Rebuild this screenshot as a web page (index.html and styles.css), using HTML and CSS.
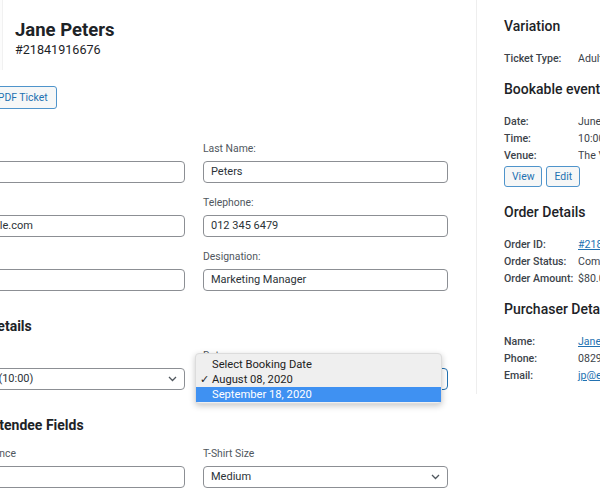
FILE: index.html
```html
<!DOCTYPE html>
<html lang="en">
<head>
<meta charset="utf-8">
<title>Attendee</title>
<link rel="stylesheet" href="styles.css">
</head>
<body>
<div class="page">
  <main class="main">
    <header class="attendee">
      <div class="avatar"></div>
      <div class="who">
        <h1 class="name">Jane Peters</h1>
        <div class="ticket-no">#21841916676</div>
      </div>
    </header>
    <button class="btn btn-ticket" type="button">Download PDF Ticket</button>

    <div class="fields fields-first">
      <div class="field"><label>First Name:</label><div class="input">Jane</div></div>
      <div class="field"><label>Last Name:</label><div class="input">Peters</div></div>
      <div class="field"><label>Email:</label><div class="input">jp@example.com</div></div>
      <div class="field"><label>Telephone:</label><div class="input">012 345 6479</div></div>
      <div class="field"><label>Company:</label><div class="input">Acme</div></div>
      <div class="field"><label>Designation:</label><div class="input">Marketing Manager</div></div>
    </div>

    <h2 class="section-title">Booking Details</h2>
    <div class="fields">
      <div class="field"><label>Slot:</label>
        <div class="input select">Session 1 (10:00)<svg class="chev" width="9" height="6" viewBox="0 0 9 6"><path d="M1 1l3.5 3.5L8 1" fill="none" stroke="#50575e" stroke-width="1.3"/></svg></div>
      </div>
      <div class="field field-date"><label>Date:</label>
        <div class="input select focus"><span class="under">August 08, 2020</span><svg class="chev" width="9" height="6" viewBox="0 0 9 6"><path d="M1 1l3.5 3.5L8 1" fill="none" stroke="#50575e" stroke-width="1.3"/></svg></div>
        <ul class="popup">
          <li class="opt">Select Booking Date</li>
          <li class="opt checked"><span class="tick">✓</span>August 08, 2020</li>
          <li class="opt hover">September 18, 2020</li>
        </ul>
      </div>
    </div>

    <h2 class="section-title">Custom Attendee Fields</h2>
    <div class="fields">
      <div class="field"><label>Food Preference</label><div class="input"></div></div>
      <div class="field"><label>T-Shirt Size</label>
        <div class="input select">Medium<svg class="chev" width="9" height="6" viewBox="0 0 9 6"><path d="M1 1l3.5 3.5L8 1" fill="none" stroke="#50575e" stroke-width="1.3"/></svg></div>
      </div>
    </div>
  </main>

  <aside class="side">
    <section class="box">
      <h3 class="box-title">Variation</h3>
      <dl class="rows">
        <dt>Ticket Type:</dt><dd>Adult</dd>
      </dl>
    </section>
    <section class="box box-event">
      <h3 class="box-title">Bookable event</h3>
      <dl class="rows">
        <dt>Date:</dt><dd>June 20, 2020</dd>
        <dt>Time:</dt><dd>10:00</dd>
        <dt>Venue:</dt><dd>The Venue</dd>
      </dl>
      <div class="btn-row">
        <button class="btn btn-small" type="button">View</button>
        <button class="btn btn-small" type="button">Edit</button>
      </div>
    </section>
    <section class="box">
      <h3 class="box-title">Order Details</h3>
      <dl class="rows">
        <dt>Order ID:</dt><dd><a href="#">#21841916676</a></dd>
        <dt>Order Status:</dt><dd>Completed</dd>
        <dt>Order Amount:</dt><dd>$80.00</dd>
      </dl>
    </section>
    <section class="box">
      <h3 class="box-title">Purchaser Details</h3>
      <dl class="rows">
        <dt>Name:</dt><dd><a href="#">Jane Peters</a></dd>
        <dt>Phone:</dt><dd>0829876543</dd>
        <dt>Email:</dt><dd><a href="#">jp@example.com</a></dd>
      </dl>
    </section>
  </aside>
</div>
</body>
</html>
```

FILE: styles.css
```css
* { box-sizing: border-box; }

html, body {
  margin: 0;
  padding: 0;
  background: #fff;
  overflow: hidden;
}

body {
  font-family: Roboto, "Liberation Sans", Arial, sans-serif;
  color: #1d2327;
  width: 600px;
  height: 500px;
}

.page {
  display: flex;
  align-items: flex-start;
}

.main {
  flex: 0 0 536px;
  margin-left: -60px;
}

.attendee {
  display: flex;
  gap: 12px;
  height: 70px;
}

.avatar {
  width: 63px;
  height: 70px;
  background: #fcfcfc;
  border-right: 1px solid #f1f1f1;
}

.who { padding-top: 19px; }

.name {
  margin: 0;
  font-size: 18.5px;
  line-height: 22px;
  font-weight: 700;
  color: #1d2327;
}

.ticket-no {
  font-size: 12.6px;
  line-height: 18px;
  color: #1d2327;
}

.btn {
  font-family: inherit;
  background: #f6f7f7;
  color: #2271b1;
  border: 1px solid #4f94cb;
  border-radius: 3px;
  cursor: pointer;
  white-space: nowrap;
}

.btn-ticket {
  margin-top: 16px;
  height: 23px;
  padding: 0 8px;
  font-size: 10.4px;
}

.fields {
  display: grid;
  grid-template-columns: 245px 245px;
  column-gap: 18px;
  row-gap: 13px;
}

.fields-first { margin-top: 33px; }

.field { position: relative; }

.field label {
  display: block;
  font-size: 10.4px;
  line-height: 13px;
  color: #50575e;
  margin-bottom: 6px;
  white-space: nowrap;
}

.input {
  height: 22px;
  border: 1px solid #8c8f94;
  border-radius: 4px;
  background: #fff;
  padding: 0 7px;
  font-size: 11px;
  line-height: 20px;
  color: #2c3338;
  white-space: nowrap;
  overflow: hidden;
}

.select {
  display: flex;
  align-items: center;
  justify-content: space-between;
  padding-right: 7px;
}

.select.focus {
  border-color: #2271b1;
}

.under { visibility: hidden; }

.chev { flex: none; }

.section-title {
  margin: 26px 0 13.5px -7px;
  font-size: 14px;
  line-height: 18px;
  font-weight: 700;
  color: #1d2327;
  white-space: nowrap;
}

.popup {
  position: absolute;
  left: -8px;
  top: 4.5px;
  width: 247px;
  margin: 0;
  padding: 3px 0 1px;
  list-style: none;
  background: #efefef;
  border: 1px solid #dcdcdc;
  border-radius: 4px;
  box-shadow: 0 2px 6px rgba(0, 0, 0, 0.22);
  font-size: 11.2px;
}

.opt {
  position: relative;
  height: 15px;
  line-height: 15px;
  padding-left: 16px;
  color: #222;
  white-space: nowrap;
}

.opt.hover {
  background: #3f91f2;
  color: #fff;
}

.tick {
  position: absolute;
  left: 4px;
  top: 0;
}

.side {
  flex: 0 0 auto;
  width: 300px;
  border-left: 1px solid #eeeeee;
  padding: 17px 0 10px 27px;
}

.box { margin-bottom: 13.5px; }
.box:last-child { margin-bottom: 0; }

.box-title {
  margin: 0 0 14.5px;
  font-size: 14px;
  line-height: 18px;
  font-weight: 500;
  color: #1d2327;
  white-space: nowrap;
}

.rows {
  display: grid;
  grid-template-columns: 74px 1fr;
  margin: 0;
  font-size: 10.6px;
  line-height: 17px;
  white-space: nowrap;
}

.rows dt {
  font-weight: 500;
  color: #3c434a;
}

.rows dd {
  margin: 0;
  color: #3c434a;
}

.rows a { color: #2271b1; }

.btn-row {
  display: flex;
  gap: 4px;
  margin-top: 2.5px;
  margin-bottom: 16.5px;
}

.box-event { margin-bottom: 0; }

.btn-small {
  height: 20.5px;
  padding: 0 7px;
  font-size: 10.4px;
}
```
